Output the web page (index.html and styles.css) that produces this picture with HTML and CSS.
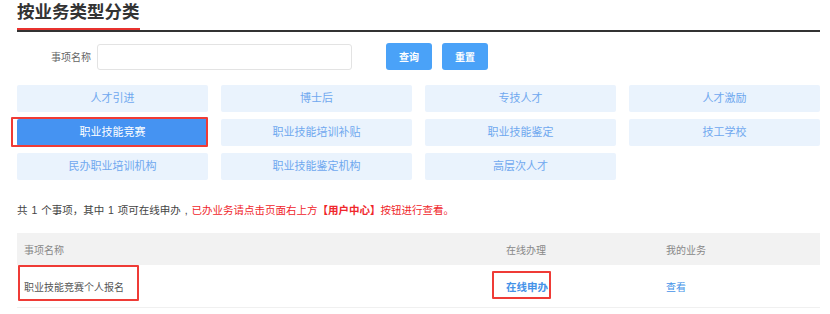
FILE: index.html
```html
<!DOCTYPE html>
<html>
<head>
    <meta charset="utf-8">
    <title>按业务类型分类</title>
    <link rel="stylesheet" href="styles.css">
</head>
<body>
    <div class="page">
        <div class="title-bar">
            <span class="title">按业务类型分类</span>
        </div>

        <div class="search">
            <label class="search-label">事项名称</label>
            <input type="text" class="search-input">
            <button class="btn btn-query">查询</button>
            <button class="btn">重置</button>
        </div>

        <div class="types">
            <a class="type">人才引进</a>
            <a class="type">博士后</a>
            <a class="type">专技人才</a>
            <a class="type">人才激励</a>
            <a class="type type-active mark mark-active">职业技能竞赛</a>
            <a class="type">职业技能培训补贴</a>
            <a class="type">职业技能鉴定</a>
            <a class="type">技工学校</a>
            <a class="type">民办职业培训机构</a>
            <a class="type">职业技能鉴定机构</a>
            <a class="type">高层次人才</a>
        </div>

        <p class="summary">
            共 1 个事项，其中 1 项可在线申办 , <span class="hint">已办业务请点击页面右上方<b>【用户中心】</b>按钮进行查看。</span>
        </p>

        <div class="list">
            <div class="list-row list-head">
                <div>事项名称</div>
                <div>在线办理</div>
                <div>我的业务</div>
            </div>
            <div class="list-row">
                <div><span class="mark mark-name">职业技能竞赛个人报名</span></div>
                <div><a class="link link-bold mark mark-apply">在线申办</a></div>
                <div><a class="link">查看</a></div>
            </div>
        </div>
    </div>
</body>
</html>
```

FILE: styles.css
```css
body {
    margin: 0;
    background: #fff;
    font-family: "Liberation Sans", "Noto Sans CJK SC", sans-serif;
    color: #333;
}
.page {
    width: 803px;
    padding-left: 17px;
}
.title-bar {
    border-bottom: 2px solid #333;
    height: 30px;
}
.title {
    display: inline-block;
    font-size: 17.5px;
    font-weight: bold;
    line-height: 24px;
    padding-bottom: 4px;
    border-bottom: 2px solid #e8322f;
    color: #333;
}
.search {
    display: flex;
    align-items: center;
    margin-top: 11px;
    padding-left: 34px;
}
.search-label {
    font-size: 10px;
    color: #666;
    margin-right: 6px;
}
.search-input {
    width: 253px;
    height: 24px;
    border: 1px solid #e3e3e3;
    border-radius: 3px;
    padding: 0;
    margin: 0 34px 0 0;
}
.btn {
    width: 46px;
    height: 27px;
    margin-right: 10px;
    background: #4aa2f8;
    color: #fff;
    border: none;
    border-radius: 3px;
    font-size: 10px;
    font-weight: bold;
    font-family: inherit;
}
.types {
    display: grid;
    grid-template-columns: repeat(4, 191px);
    column-gap: 13px;
    row-gap: 7px;
    margin-top: 15px;
}
.type {
    height: 27px;
    line-height: 27px;
    text-align: center;
    background: #eaf3fd;
    color: #6fa8ef;
    font-size: 11px;
    border-radius: 2px;
}
.type-active {
    background: #4593f2;
    color: #fff;
}
.summary {
    margin: 23px 0 0;
    font-size: 10.5px;
    line-height: 14px;
    color: #444;
    word-spacing: 1px;
}
.hint {
    color: #f0262b;
}
.list {
    margin-top: 16px;
    font-size: 10px;
}
.list-row {
    display: grid;
    grid-template-columns: 482px 160px 161px;
    align-items: center;
    height: 42px;
    border-bottom: 1px solid #f0f0f0;
    color: #555;
}
.list-row div {
    padding-left: 7px;
}
.list-head {
    height: 32px;
    background: #f2f2f2;
    border-bottom: none;
    color: #888;
}
.link {
    color: #4592e8;
}
.link-bold {
    font-weight: bold;
    font-size: 10.5px;
}
.mark {
    position: relative;
}
.mark::after {
    content: "";
    position: absolute;
    border: 2px solid #ef3b36;
    border-radius: 1px;
}
.mark-active::after {
    left: -6px;
    right: 0;
    top: -2px;
    bottom: -1px;
}
.mark-name::after {
    left: -6px;
    right: -15px;
    top: -17px;
    bottom: -8px;
}
.mark-apply::after {
    left: -14px;
    right: -3px;
    top: -10px;
    bottom: -6px;
}
```
